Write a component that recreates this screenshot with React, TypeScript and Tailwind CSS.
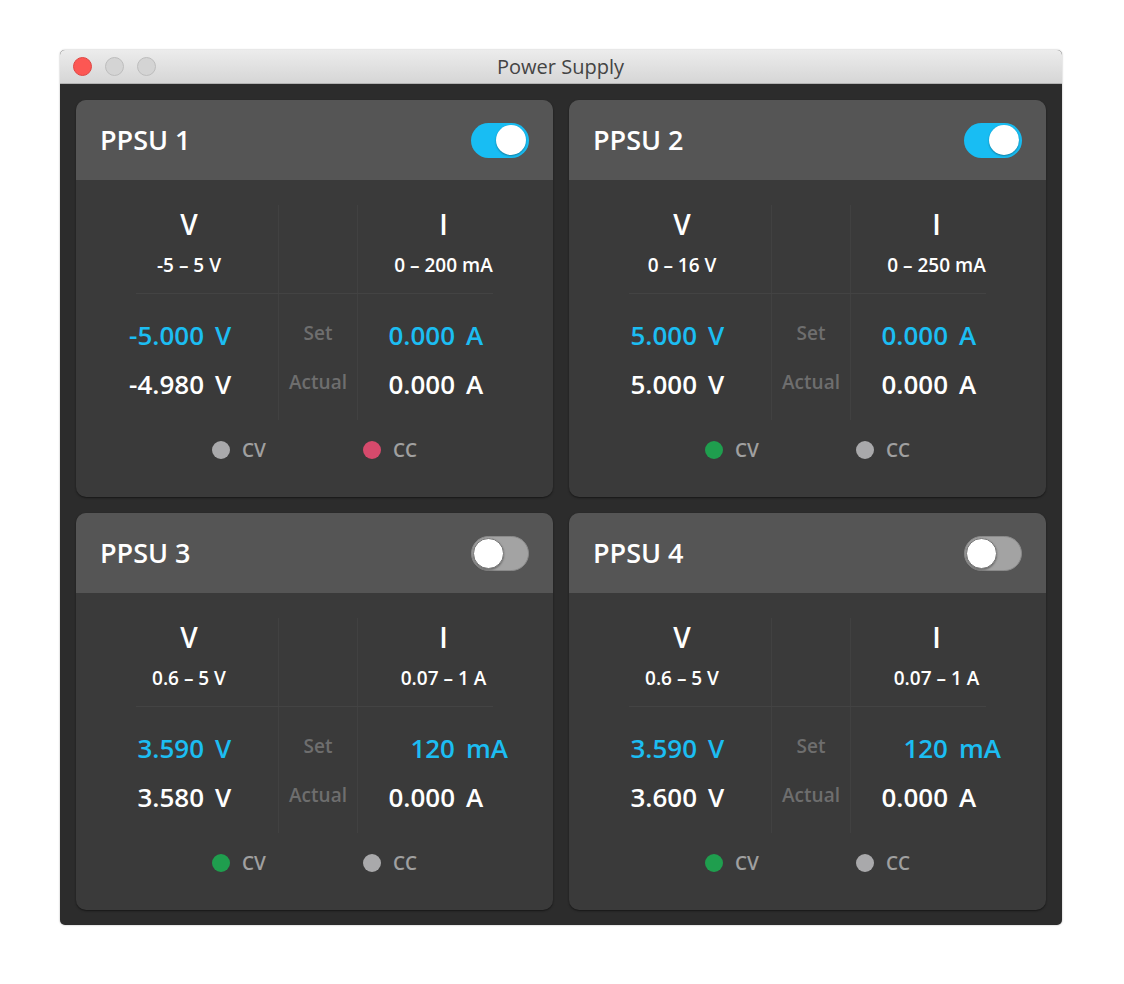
import React from "react";

type Dot = "gray" | "red" | "green";

const units = [
  {
    name: "PPSU 1",
    on: true,
    vRange: "-5 – 5 V",
    iRange: "0 – 200 mA",
    vSet: "-5.000",
    vAct: "-4.980",
    iSet: ["0.000", "A"],
    iAct: ["0.000", "A"],
    cv: "gray" as Dot,
    cc: "red" as Dot,
  },
  {
    name: "PPSU 2",
    on: true,
    vRange: "0 – 16 V",
    iRange: "0 – 250 mA",
    vSet: "5.000",
    vAct: "5.000",
    iSet: ["0.000", "A"],
    iAct: ["0.000", "A"],
    cv: "green" as Dot,
    cc: "gray" as Dot,
  },
  {
    name: "PPSU 3",
    on: false,
    vRange: "0.6 – 5 V",
    iRange: "0.07 – 1 A",
    vSet: "3.590",
    vAct: "3.580",
    iSet: ["120", "mA"],
    iAct: ["0.000", "A"],
    cv: "green" as Dot,
    cc: "gray" as Dot,
  },
  {
    name: "PPSU 4",
    on: false,
    vRange: "0.6 – 5 V",
    iRange: "0.07 – 1 A",
    vSet: "3.590",
    vAct: "3.600",
    iSet: ["120", "mA"],
    iAct: ["0.000", "A"],
    cv: "green" as Dot,
    cc: "gray" as Dot,
  },
];

const dotColor: Record<Dot, string> = {
  gray: "bg-[#a9a9ab]",
  red: "bg-[#d64a6c]",
  green: "bg-[#1f9e4e]",
};

const Toggle = ({ on }: { on: boolean }) =>
  on ? (
    <div className="w-[58px] h-[35px] rounded-full bg-[#18bdf3] flex items-center justify-end px-[3px]">
      <div className="size-[30px] rounded-full bg-white shadow-[0_1px_2px_rgba(0,0,0,0.35)]" />
    </div>
  ) : (
    <div className="w-[58px] h-[35px] rounded-full bg-[#a3a3a3] border border-[#8a8a8a] flex items-center justify-start px-[1px]">
      <div className="size-[31px] rounded-full bg-white border border-[#777] shadow-[0_1px_2px_rgba(0,0,0,0.35)]" />
    </div>
  );

const Value = ({ num, unit, blue, numW }: { num: string; unit: string; blue?: boolean; numW: string }) => (
  <div className={`flex h-[40px] items-center text-[26px] font-semibold ${blue ? "text-[#1cbdf2]" : "text-white"}`}>
    <span className={`${numW} text-right`}>{num}</span>
    <span className="ml-[11px]">{unit}</span>
  </div>
);

const VLine = () => <div className="w-px self-stretch bg-[#414141]" />;

const Card = ({ u }: { u: (typeof units)[number] }) => (
  <div className="bg-[#3a3a3a] rounded-[10px] overflow-hidden shadow-[0_1px_2px_rgba(0,0,0,0.5)]">
    {/* Header */}
    <div className="h-[80px] bg-[#555555] flex items-center justify-between px-[24px]">
      <h2 className="text-[27px] font-semibold text-white">{u.name}</h2>
      <Toggle on={u.on} />
    </div>

    {/* Body */}
    <div className="px-[24px] pt-[25px] pb-[32px]">
      <div className="flex h-[88px]">
        <div className="w-[178px] flex flex-col items-center">
          <div className="h-[38px] leading-[38px] text-[28px] font-semibold text-white">V</div>
          <div className="mt-[9px] h-[26px] leading-[26px] text-[19px] font-semibold text-white">{u.vRange}</div>
        </div>
        <VLine />
        <div className="w-[78px]" />
        <VLine />
        <div className="flex-1 flex flex-col items-center">
          <div className="h-[38px] leading-[38px] text-[28px] font-semibold text-white">I</div>
          <div className="mt-[9px] h-[26px] leading-[26px] text-[19px] font-semibold text-white">{u.iRange}</div>
        </div>
      </div>

      <div className="h-px mx-[36px] bg-[#434343]" />

      <div className="flex h-[126px]">
        <div className="w-[178px] pt-[21px] flex flex-col gap-[9px]">
          <Value num={u.vSet} unit="V" blue numW="w-[104px]" />
          <Value num={u.vAct} unit="V" numW="w-[104px]" />
        </div>
        <VLine />
        <div className="w-[78px] pt-[21px] flex flex-col gap-[13px] items-center text-[19px] font-semibold text-[#6e6e6e]">
          <div className="h-[36px] leading-[36px]">Set</div>
          <div className="h-[36px] leading-[36px]">Actual</div>
        </div>
        <VLine />
        <div className="flex-1 pt-[21px] flex flex-col gap-[9px]">
          <Value num={u.iSet[0]} unit={u.iSet[1]} blue numW="w-[97px]" />
          <Value num={u.iAct[0]} unit={u.iAct[1]} numW="w-[97px]" />
        </div>
      </div>

      {/* Status */}
      <div className="mt-[15px] h-[30px] flex items-center justify-center gap-[97px] text-[19px] font-semibold text-[#a0a0a0]">
        <div className="flex items-center gap-[12px]">
          <span className={`size-[18px] rounded-full ${dotColor[u.cv]}`} />
          <span>CV</span>
        </div>
        <div className="flex items-center gap-[12px]">
          <span className={`size-[18px] rounded-full ${dotColor[u.cc]}`} />
          <span>CC</span>
        </div>
      </div>
    </div>
  </div>
);

export default function App() {
  return (
    <div className="min-h-screen bg-white pt-[50px] pl-[60px]" style={{ fontFamily: '"Open Sans", "Noto Sans", sans-serif' }}>
      <div className="w-[1002px] rounded-[5px] overflow-hidden bg-[#2c2c2c] shadow-[0_0_2px_rgba(0,0,0,0.35)]">
        {/* Title bar */}
        <div className="relative h-[34px] bg-linear-to-b from-[#ececec] to-[#d6d6d6] border-b border-[#b3b3b3] flex items-center">
          <div className="flex gap-[13px] pl-[13px]">
            <span className="size-[19px] rounded-full bg-[#fc5753] border border-[#df4744]" />
            <span className="size-[19px] rounded-full bg-[#d4d4d4] border border-[#bdbdbd]" />
            <span className="size-[19px] rounded-full bg-[#d4d4d4] border border-[#bdbdbd]" />
          </div>
          <div className="flex-1 text-center pr-[97px] text-[20px] text-[#444]">Power Supply</div>
        </div>

        {/* Grid */}
        <div className="grid grid-cols-2 gap-[16px] p-[16px] pb-[15px]">
          {units.map((u) => (
            <Card key={u.name} u={u} />
          ))}
        </div>
      </div>
    </div>
  );
}
